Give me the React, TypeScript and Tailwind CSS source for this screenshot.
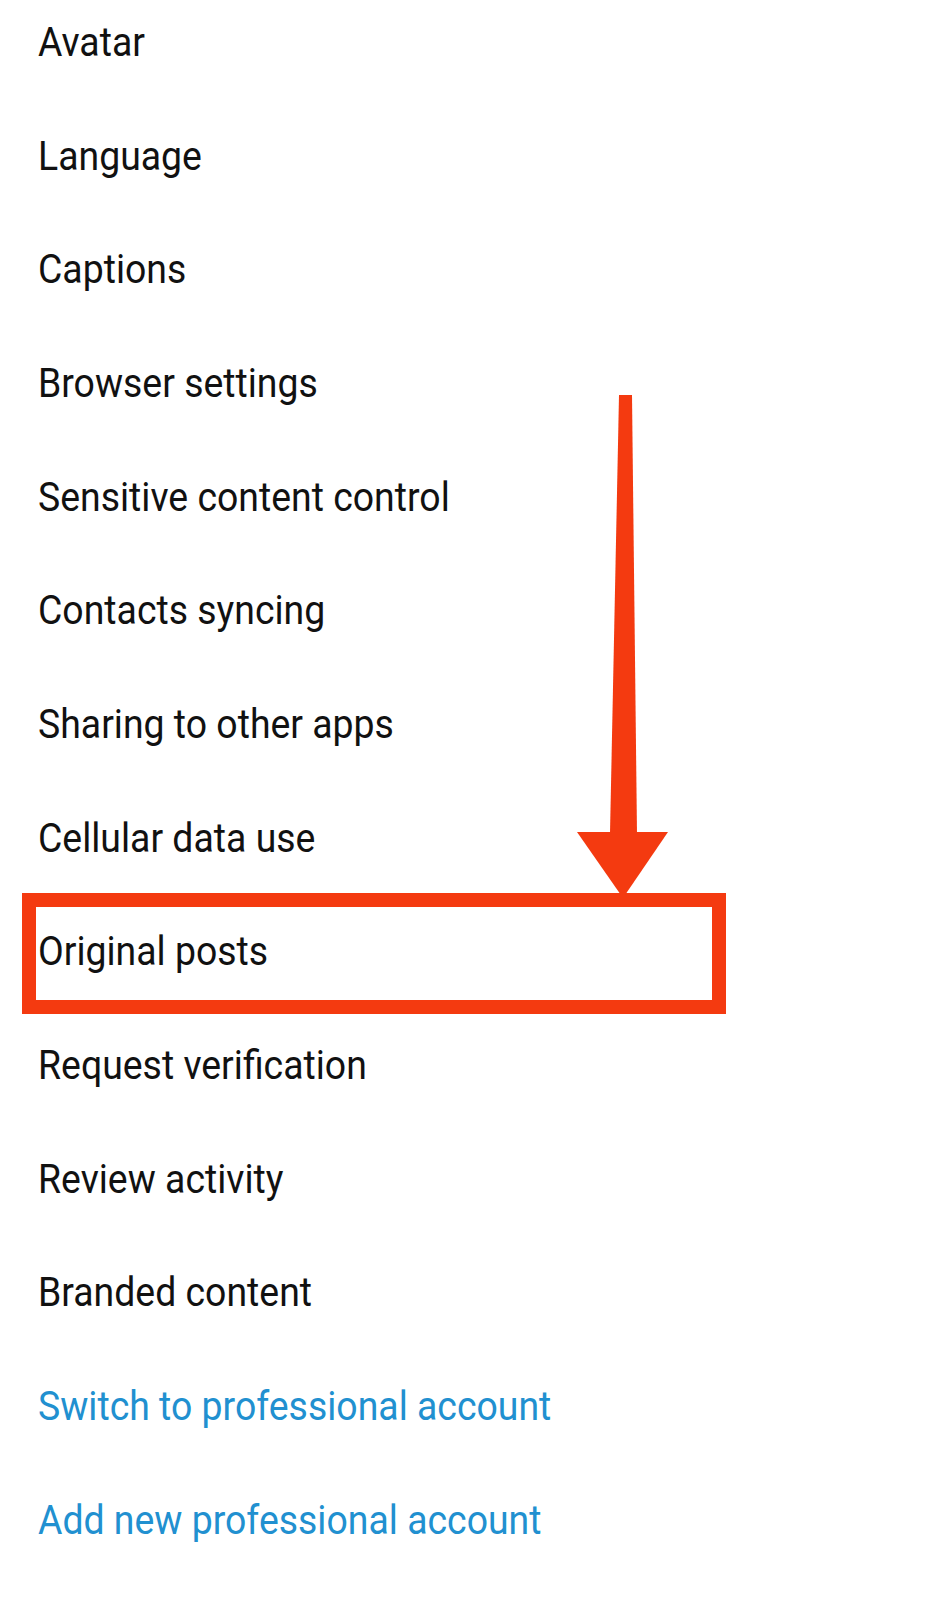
import React from 'react';

const items = [
  'Avatar',
  'Language',
  'Captions',
  'Browser settings',
  'Sensitive content control',
  'Contacts syncing',
  'Sharing to other apps',
  'Cellular data use',
  'Original posts',
  'Request verification',
  'Review activity',
  'Branded content',
];

const links = ['Switch to professional account', 'Add new professional account'];

const App = () => {
  return (
    <div className="relative w-[948px] h-[1600px] overflow-hidden bg-white" style={{ fontFamily: 'Roboto, "Noto Sans", sans-serif' }}>
      <div className="-mt-[14px] flex flex-col">
        {items.map((label) => (
          <div key={label} className="h-[113.7px] flex items-center pl-[38px]">
            <span className="text-[40px] leading-none text-[#111111] origin-left scale-x-[0.935] whitespace-nowrap inline-block">{label}</span>
          </div>
        ))}
        {links.map((label) => (
          <div key={label} className="h-[113.7px] flex items-center pl-[38px]">
            <span className="text-[40px] leading-none text-[#2190d0] origin-left scale-x-[0.935] whitespace-nowrap inline-block">{label}</span>
          </div>
        ))}
      </div>

      {/* highlight box */}
      <div className="absolute left-[22px] top-[893px] w-[704px] h-[121px] border-[14px] border-[#f43a10]" />

      {/* arrow */}
      <svg className="absolute left-0 top-0" width="948" height="1600" viewBox="0 0 948 1600">
        <polygon points="619,395 632,395 637,834 610,834" fill="#f43a10" />
        <polygon points="577,832 668,832 623,898" fill="#f43a10" />
      </svg>
    </div>
  );
};

export default App;
